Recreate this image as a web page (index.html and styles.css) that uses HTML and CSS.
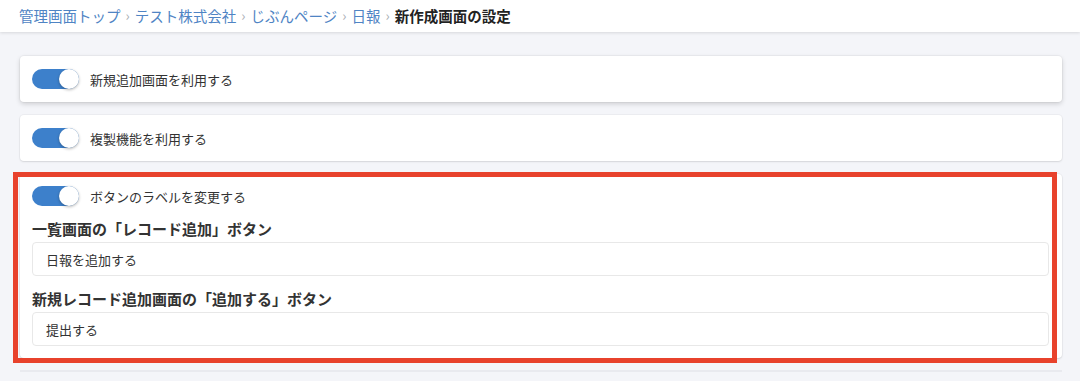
FILE: index.html
```html
<!DOCTYPE html>
<html lang="ja">
<head>
  <meta charset="UTF-8">
  <title>新作成画面の設定</title>
  <link rel="stylesheet" href="styles.css">
</head>
<body>
<div class="header">
  <nav class="breadcrumb">
    <a href="#">管理画面トップ</a><span class="sep">›</span>
    <a href="#">テスト株式会社</a><span class="sep">›</span>
    <a href="#">じぶんページ</a><span class="sep">›</span>
    <a href="#">日報</a><span class="sep">›</span>
    <span class="current">新作成画面の設定</span>
  </nav>
</div>

<div class="main">
  <div class="card card-raised">
    <label class="switch-row">
      <span class="switch on"><span class="knob"></span></span>
      <span>新規追加画面を利用する</span>
    </label>
  </div>

  <div class="card">
    <label class="switch-row">
      <span class="switch on"><span class="knob"></span></span>
      <span>複製機能を利用する</span>
    </label>
  </div>

  <div class="card card-marked">
    <div class="mark"></div>
    <label class="switch-row">
      <span class="switch on"><span class="knob"></span></span>
      <span>ボタンのラベルを変更する</span>
    </label>
    <div class="field-label">一覧画面の「レコード追加」ボタン</div>
    <input class="text-input" type="text" value="日報を追加する">
    <div class="field-label">新規レコード追加画面の「追加する」ボタン</div>
    <input class="text-input" type="text" value="提出する">
  </div>

  <div class="divider"></div>
</div>
</body>
</html>
```

FILE: styles.css
```css
body {
  margin: 0;
  font-family: "Noto Sans CJK JP", "Noto Sans", sans-serif;
  background-color: #f4f5f9;
  color: #333;
}
.header {
  background-color: #fff;
  height: 32px;
  box-shadow: 0 1px 3px rgba(0,0,0,0.12);
  position: relative;
}
.breadcrumb {
  display: flex;
  align-items: center;
  height: 30px;
  padding-left: 19px;
  font-size: 14.5px;
  white-space: nowrap;
}
.breadcrumb a {
  color: #4f84c4;
  text-decoration: none;
}
.breadcrumb .sep {
  color: #a9adb3;
  margin: 0 5px;
  font-size: 14px;
}
.breadcrumb .current {
  color: #222;
  font-weight: bold;
}
.main {
  padding: 24px 18px 0 20px;
  height: 325px;
  overflow: hidden;
}
.card {
  background-color: #fff;
  border-radius: 4px;
  box-shadow: 0 1px 2px rgba(0,0,0,0.1), 0 0 0 1px rgba(0,0,0,0.03);
  padding: 13px 12px;
  margin-bottom: 13px;
}
.card-raised {
  box-shadow: 0 2px 5px rgba(0,0,0,0.16), 0 0 0 1px rgba(0,0,0,0.03);
}
.card-marked {
  position: relative;
  padding: 12px 13px 12px 12px;
  margin-bottom: 12px;
}
.divider {
  height: 0;
  border-top: 2px solid #e9eaef;
}
.mark {
  position: absolute;
  left: -7px;
  top: -2px;
  width: 1034px;
  height: 181px;
  border: 5px solid #e8422c;
  pointer-events: none;
}
.switch-row {
  display: flex;
  align-items: center;
  height: 20px;
  font-size: 13px;
  color: #333;
}
.switch {
  position: relative;
  width: 47px;
  height: 20px;
  border-radius: 10px;
  background-color: #3d80cb;
  margin-right: 11px;
  flex-shrink: 0;
}
.switch .knob {
  position: absolute;
  right: 0;
  top: 0;
  width: 20px;
  height: 20px;
  border-radius: 50%;
  background-color: #fff;
  box-shadow: 0 1px 3px rgba(0,0,0,0.3);
}
.field-label {
  font-size: 15px;
  font-weight: bold;
  line-height: 22px;
  margin-top: 12px;
  color: #333;
}
.text-input {
  display: block;
  box-sizing: border-box;
  width: 100%;
  height: 34px;
  margin-top: 2px;
  padding: 0 13px;
  border: 1px solid #e8e8e8;
  border-radius: 4px;
  font-family: inherit;
  font-size: 13px;
  color: #333;
  background-color: #fff;
}
```
